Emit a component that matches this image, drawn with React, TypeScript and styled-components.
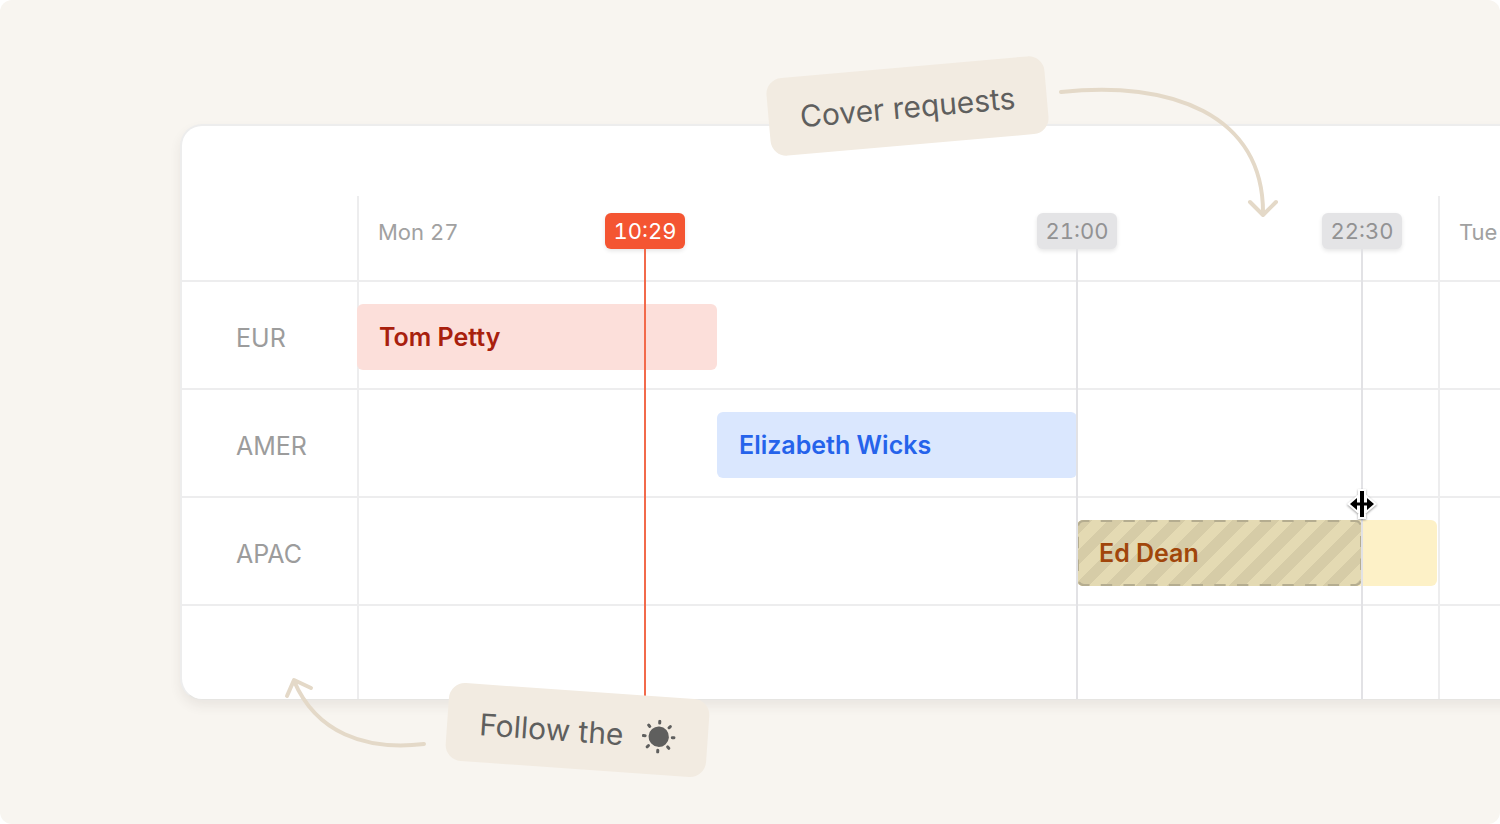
import React from "react";
import styled, { createGlobalStyle } from "styled-components";

const HOUR = 45;
const LABEL = 176;

const GlobalStyle = createGlobalStyle`
  *, *::before, *::after { box-sizing: border-box; }
  html { background: #ffffff; }
  body {
    margin: 0;
    overflow-x: hidden;
    font-family: Inter, "Liberation Sans", sans-serif;
    -webkit-font-smoothing: antialiased;
  }
`;

const Stage = styled.main`
  position: relative;
  overflow: hidden;
  padding: 124px 0 124px 180px;
  border-radius: 12px;
  background: #f8f5f0;
`;

const Card = styled.section`
  margin-right: -24px;
  padding-top: 70px;
  border: 2px solid #ededed;
  border-right: 0;
  border-bottom-width: 1px;
  border-bottom-color: #e6e5e2;
  border-radius: 22px 0 0 22px;
  background: #ffffff;
  box-shadow: 0 6px 12px rgba(60, 55, 50, 0.08);
`;

const Schedule = styled.div`
  position: relative;
  overflow: hidden;
  border-radius: 0 0 0 20px;
`;

const Row = styled.div<{ $height: number; $last?: boolean }>`
  display: flex;
  height: ${(p) => p.$height}px;
  border-bottom: ${(p) => (p.$last ? "0" : "2px solid #ededee")};
`;

const RowLabel = styled.h3`
  flex: none;
  display: flex;
  align-items: center;
  width: ${LABEL - 1}px;
  margin: 0;
  padding: 6px 0 0 54px;
  color: #9c9c9c;
  font-size: 25px;
  font-weight: 400;
`;

const Day = styled.div`
  flex: none;
  display: grid;
  grid-template-columns: repeat(24, ${HOUR}px);
  align-items: center;
  width: ${HOUR * 24 + 1}px;
  padding-top: 4px;
  box-shadow: inset 2px 0 0 #ededee;
`;

const DayName = styled.h2`
  grid-column: 1 / -1;
  margin: 0;
  padding: 0 0 16px 21px;
  color: #a1a1a1;
  font-size: 22px;
  line-height: 28px;
  font-weight: 400;
  font-variant-numeric: tabular-nums;
`;

type Tone = "red" | "blue" | "yellow";

const tones: Record<Tone, { back: string; text: string }> = {
  red: { back: "#fcdfda", text: "#a8200d" },
  blue: { back: "#dae7fe", text: "#2563eb" },
  yellow: { back: "#fdf1c7", text: "#a1460b" },
};

const Shift = styled.div<{ $tone: Tone; $start: number; $hours: number }>`
  grid-column: ${(p) => p.$start + 1} / span ${(p) => p.$hours};
  display: flex;
  align-items: center;
  height: 66px;
  padding: 0 0 0 22px;
  border-radius: 6px;
  background: ${(p) => tones[p.$tone].back};
  color: ${(p) => tones[p.$tone].text};
  font-size: 25px;
  font-weight: 600;
`;

const CoveredShift = styled(Shift)`
  padding: 0;
`;

const CoverRequest = styled.div`
  position: relative;
  display: flex;
  align-items: center;
  width: 285px;
  height: 66px;
  padding: 0 0 0 22px;
  border-radius: 6px;
  background: repeating-linear-gradient(
    135deg,
    #d6cca7 0 11px,
    #e4dab3 11px 22px
  );
`;

const DashedOutline = styled.svg`
  position: absolute;
  inset: 0;
  width: 100%;
  height: 100%;

  rect {
    width: calc(100% - 2px);
    height: calc(100% - 2px);
  }
`;

const Marker = styled.div<{ $live?: boolean }>`
  position: absolute;
  top: 17px;
  bottom: 0;
  display: flex;
  flex-direction: column;
  align-items: center;
  width: 80px;
  margin-left: -40px;

  &::after {
    content: "";
    flex: 1;
    width: 2px;
    background: ${(p) => (p.$live ? "#f26a4b" : "#e2e2e5")};
  }
`;

const MarkerTime = styled.time<{ $live?: boolean }>`
  width: 80px;
  border-radius: 6px;
  background: ${(p) => (p.$live ? "#f45532" : "#e4e4e6")};
  box-shadow: 0 2px 4px rgba(0, 0, 0, 0.1);
  color: ${(p) => (p.$live ? "#ffffff" : "#929293")};
  font-size: 22px;
  line-height: 36px;
  font-variant-numeric: tabular-nums;
  text-align: center;
`;

const Note = styled.p<{ $x: number; $y: number; $width: number; $tilt: number }>`
  position: absolute;
  left: ${(p) => p.$x}px;
  top: ${(p) => p.$y}px;
  display: flex;
  align-items: center;
  justify-content: center;
  gap: 18px;
  width: ${(p) => p.$width}px;
  height: 78px;
  margin: 0;
  padding-top: 2px;
  border-radius: 16px;
  background: #f2ebe1;
  color: #5f5f5e;
  font-size: 30px;
  white-space: nowrap;
  transform: rotate(${(p) => p.$tilt}deg);
`;

const Drawing = styled.svg<{ $x: number; $y: number }>`
  position: absolute;
  left: ${(p) => p.$x}px;
  top: ${(p) => p.$y}px;
  fill: none;
  stroke: #e4d9c8;
  stroke-width: 4;
  stroke-linecap: round;
  stroke-linejoin: round;
`;

const Cursor = styled.svg`
  position: absolute;
  left: 1163px;
  top: 291px;
  filter: drop-shadow(0 1px 1px rgba(0, 0, 0, 0.4));
`;

const SunIcon = () => (
  <svg width="34" height="34" viewBox="0 0 34 34" aria-label="sun" role="img">
    <circle cx="17" cy="17" r="10.200" fill="#5f5f5e" />
    {[0, 45, 90, 135, 180, 225, 270, 315].map((angle) => (
      <path
        key={angle}
        d="M17 1.600v1.800"
        stroke="#5f5f5e"
        strokeWidth="3"
        strokeLinecap="round"
        transform={`rotate(${angle} 17 17)`}
      />
    ))}
  </svg>
);

const resizeShape =
  "M15 4h4v11.500h3v-4.500l7 6l-7 6v-4.500h-3v11.500h-4v-11.500h-3v4.500l-7-6l7-6v4.500h3z";

const markers = [
  { time: "10:29", offset: 288, live: true },
  { time: "21:00", offset: 720 },
  { time: "22:30", offset: 1005 },
];

export default function App() {
  return (
    <Stage>
      <GlobalStyle />
      <Card aria-label="On-call schedule">
        <Schedule>
          <Row $height={86}>
            <RowLabel as="div" />
            <Day>
              <DayName>Mon 27</DayName>
            </Day>
            <Day>
              <DayName>Tue</DayName>
            </Day>
          </Row>
          <Row $height={108}>
            <RowLabel>EUR</RowLabel>
            <Day>
              <Shift $tone="red" $start={0} $hours={8}>Tom Petty</Shift>
            </Day>
            <Day />
          </Row>
          <Row $height={108}>
            <RowLabel>AMER</RowLabel>
            <Day>
              <Shift $tone="blue" $start={8} $hours={8}>Elizabeth Wicks</Shift>
            </Day>
            <Day />
          </Row>
          <Row $height={108}>
            <RowLabel>APAC</RowLabel>
            <Day>
              <CoveredShift $tone="yellow" $start={16} $hours={8}>
                <CoverRequest>
                  <DashedOutline aria-hidden="true">
                    <rect
                      x="1"
                      y="1"
                      rx="6"
                      fill="none"
                      stroke="#b5ad90"
                      strokeWidth="2"
                      strokeDasharray="11.400 11.300"
                      strokeDashoffset="6"
                    />
                  </DashedOutline>
                  Ed Dean
                </CoverRequest>
              </CoveredShift>
            </Day>
            <Day />
          </Row>
          <Row $height={93} $last>
            <RowLabel as="div" />
            <Day />
            <Day />
          </Row>
          {markers.map((m) => (
            <Marker key={m.time} $live={m.live} style={{ left: LABEL + m.offset - 1 }}>
              <MarkerTime $live={m.live}>{m.time}</MarkerTime>
            </Marker>
          ))}
          <Cursor width="34" height="34" viewBox="0 0 34 34" aria-hidden="true">
            <path d={resizeShape} fill="#ffffff" stroke="#ffffff" strokeWidth="4" />
            <path d={resizeShape} fill="#000000" />
          </Cursor>
        </Schedule>
      </Card>

      <Note $x={768} $y={67} $width={279} $tilt={-5}>Cover requests</Note>
      <Drawing $x={1050} $y={80} width="240" height="144" aria-hidden="true">
        <path d="M11 12C120 0 214 34 213 134M200 122L213 135L226 122" />
      </Drawing>

      <Note $x={447} $y={691} $width={261} $tilt={4}>
        Follow the <SunIcon />
      </Note>
      <Drawing $x={280} $y={670} width="150" height="84" aria-hidden="true">
        <path d="M144 74C84 81 36 62 14 11M7 26L14 10L31 18" />
      </Drawing>
    </Stage>
  );
}
